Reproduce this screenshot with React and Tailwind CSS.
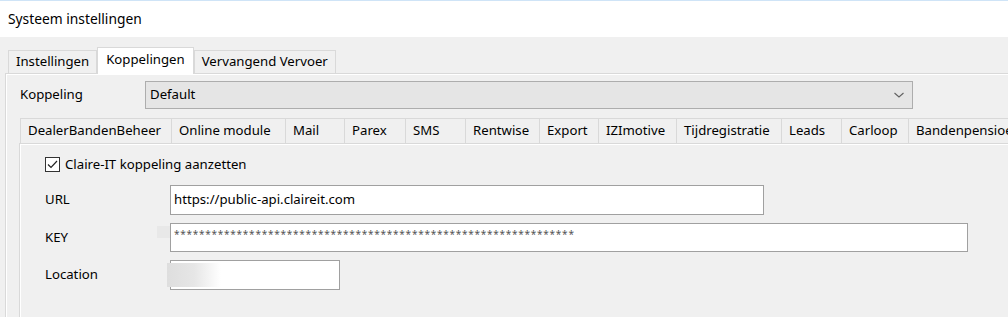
import React from 'react';

const innerTabs = [
  { label: 'DealerBandenBeheer', w: 'w-[151px]' },
  { label: 'Online module', w: 'w-[114px]' },
  { label: 'Mail', w: 'w-[59px]' },
  { label: 'Parex', w: 'w-[61px]' },
  { label: 'SMS', w: 'w-[60px]' },
  { label: 'Rentwise', w: 'w-[74px]' },
  { label: 'Export', w: 'w-[59px]' },
  { label: 'IZImotive', w: 'w-[78px]' },
  { label: 'Tijdregistratie', w: 'w-[105px]' },
  { label: 'Leads', w: 'w-[60px]' },
  { label: 'Carloop', w: 'w-[67px]' },
  { label: 'Bandenpensioen', w: 'w-[110px]' },
];

const Field = ({ label, children }) => (
  <div className="flex items-center">
    <div className="w-[125px] shrink-0">{label}</div>
    {children}
  </div>
);

const App = () => {
  return (
    <div className="w-[1008px] h-[317px] overflow-hidden bg-[#f0f0f0] text-[13.2px] text-black font-['Noto_Sans',sans-serif]">
      <div className="h-[37px] bg-white border-t border-[#cfe4f7] flex items-center pl-[8px] text-[13.8px]">
        Systeem instellingen
      </div>

      <div className="flex items-end h-[36px] pl-[8px]">
        <div className="h-[23px] px-[7px] flex items-center border border-b-0 border-[#d9d9d9]">
          Instellingen
        </div>
        <div className="h-[27px] px-[8px] pb-[3px] flex items-center bg-white border border-b-0 border-[#d9d9d9] -mb-px relative z-10">
          Koppelingen
        </div>
        <div className="h-[23px] px-[7px] flex items-center border border-b-0 border-[#d9d9d9]">
          Vervangend Vervoer
        </div>
      </div>

      <div className="ml-[5px] border-l border-t border-[#d9d9d9] h-[300px]">
        <div className="border-l border-t border-white h-full pl-[13px] pt-[6px]">
          <div className="flex items-center h-[28px]">
            <div className="w-[125px] shrink-0">Koppeling</div>
            <div className="w-[768px] h-[28px] bg-[#e5e5e5] border border-[#adadad] flex items-center justify-between pl-[4px] pr-[6px]">
              <span>Default</span>
              <svg width="12" height="8" viewBox="0 0 12 8" className="mr-[1px]">
                <path d="M1.5 2 L6 6 L10.5 2" fill="none" stroke="#606060" strokeWidth="1.1" />
              </svg>
            </div>
          </div>

          <div className="flex h-[25px] mt-[9px] whitespace-nowrap">
            {innerTabs.map((t) => (
              <div
                key={t.label}
                className={`${t.w} shrink-0 h-[25px] pl-[7px] flex items-center border border-b-0 border-r-0 border-[#d9d9d9]`}
              >
                {t.label}
              </div>
            ))}
          </div>

          <div className="-ml-px border-l border-t border-[#d9d9d9] h-[200px]">
            <div className="border-l border-t border-white h-full pl-[24px] pt-[11px]">
              <label className="flex items-center gap-[5px] h-[17px]">
                <span className="w-[15px] h-[15px] border border-[#333] bg-white flex items-center justify-center">
                  <svg width="11" height="9" viewBox="0 0 11 9">
                    <path d="M1 4.5 L4 7.5 L10 1" fill="none" stroke="#222" strokeWidth="1.2" />
                  </svg>
                </span>
                Claire-IT koppeling aanzetten
              </label>

              <div className="flex flex-col gap-[8px] mt-[12px]">
                <Field label="URL">
                  <div className="w-[594px] h-[30px] bg-white border border-[#a0a0a0] flex items-center pl-[3px]">
                    https://public-api.claireit.com
                  </div>
                </Field>
                <Field label="KEY">
                  <div className="relative w-[798px] h-[29px] bg-white border border-[#a0a0a0] pl-[3px] pt-[3px] text-[10px] leading-[14px] text-[#555] tracking-[0.75px]">
                    <span className="absolute -left-[14px] top-[2px] w-[13px] h-[12px] bg-[#e8e8e8]" />
                    {'*'.repeat(64)}
                  </div>
                </Field>
                <Field label="Location">
                  <div className="relative w-[170px] h-[30px] bg-white border border-[#a0a0a0]">
                    <span className="absolute -left-[4px] top-[2px] w-[54px] h-[24px] bg-gradient-to-r from-[#dedede] via-[#e6e6e6] to-white" />
                  </div>
                </Field>
              </div>
            </div>
          </div>
        </div>
      </div>
    </div>
  );
};

export default App;
